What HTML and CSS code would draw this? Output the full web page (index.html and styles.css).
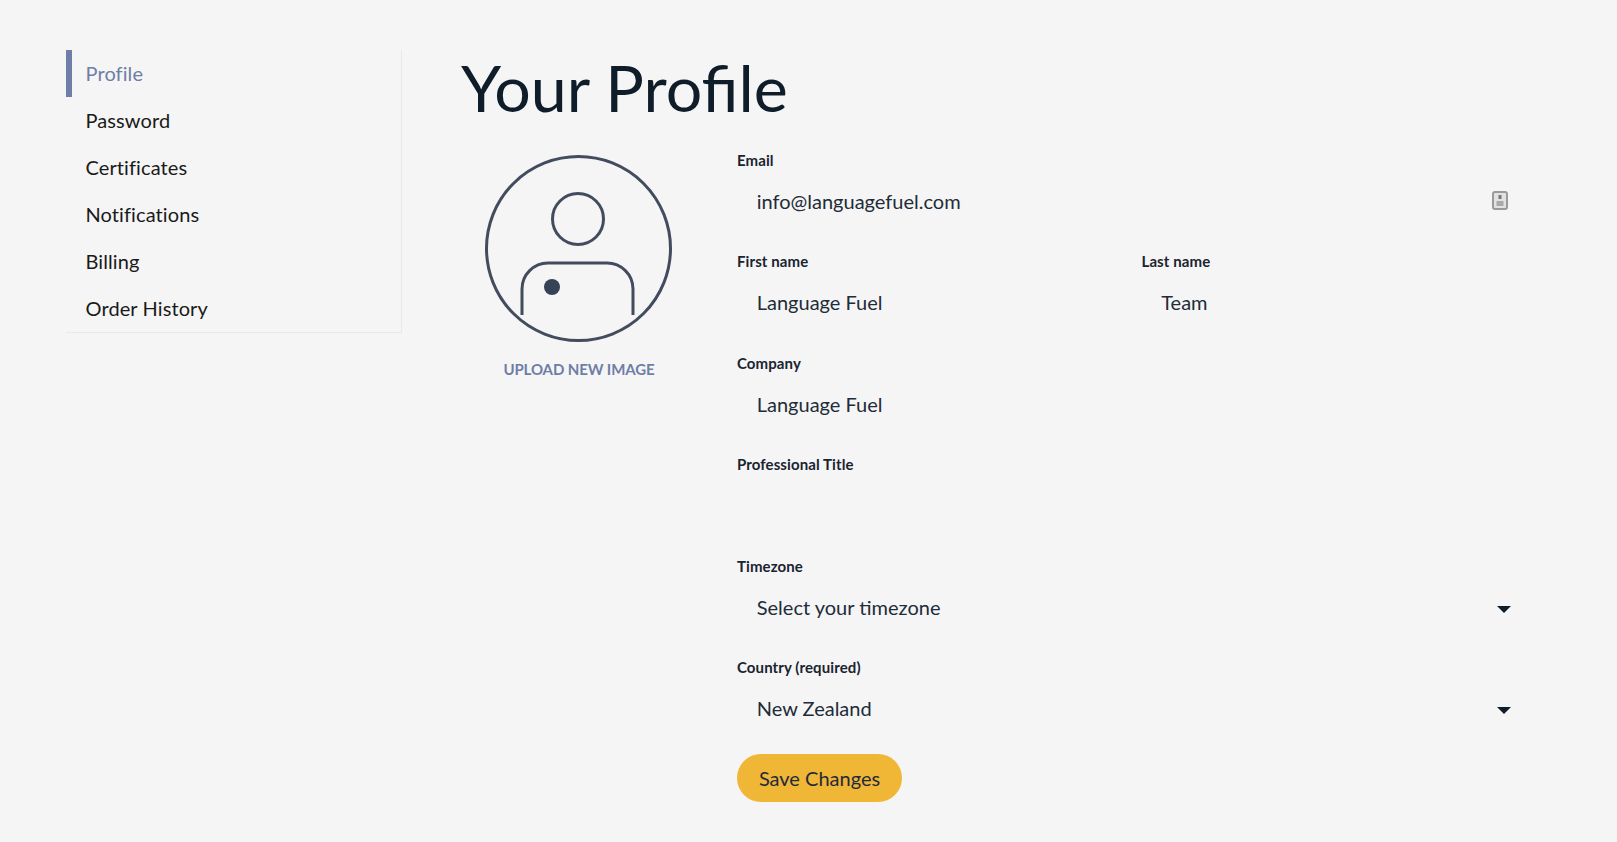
FILE: index.html
```html
<!DOCTYPE html>
<html lang="en">
<head>
    <meta charset="UTF-8">
    <title>Your Profile</title>
    <link rel="stylesheet" href="styles.css">
</head>
<body>
    <div class="page">
        <ul class="side-nav">
            <li class="active">Profile</li>
            <li>Password</li>
            <li>Certificates</li>
            <li>Notifications</li>
            <li>Billing</li>
            <li>Order History</li>
        </ul>
        <div class="content">
            <h1>Your Profile</h1>
            <div class="profile">
                <div class="avatar">
                    <svg width="188" height="188" viewBox="0 0 188 188" fill="none" stroke="#434c5e" stroke-width="3">
                        <circle cx="93.5" cy="93.5" r="92"/>
                        <circle cx="93" cy="64" r="25.5"/>
                        <path d="M37 160V134a26 26 0 0 1 26-26H122a26 26 0 0 1 26 26V160"/>
                        <circle cx="67" cy="132" r="8" fill="#364256" stroke="none"/>
                    </svg>
                    <span class="upload">UPLOAD NEW IMAGE</span>
                </div>
                <form class="fields">
                    <div class="field">
                        <label>Email</label>
                        <div class="value">info@languagefuel.com
                            <svg class="contact-icon" width="16" height="19" viewBox="0 0 16 19">
                                <rect x="1" y="1" width="14" height="17" rx="2" fill="#e2e2e2" stroke="#9a9a9a" stroke-width="2"/>
                                <rect x="6.5" y="4" width="3" height="4" fill="#777"/>
                                <rect x="4.5" y="10" width="7" height="5" fill="#aaa"/>
                            </svg>
                        </div>
                    </div>
                    <div class="field-row">
                        <div class="field">
                            <label>First name</label>
                            <div class="value">Language Fuel</div>
                        </div>
                        <div class="field">
                            <label>Last name</label>
                            <div class="value">Team</div>
                        </div>
                    </div>
                    <div class="field">
                        <label>Company</label>
                        <div class="value">Language Fuel</div>
                    </div>
                    <div class="field">
                        <label>Professional Title</label>
                        <div class="value"></div>
                    </div>
                    <div class="field">
                        <label>Timezone</label>
                        <div class="value">Select your timezone <span class="caret"></span></div>
                    </div>
                    <div class="field last">
                        <label>Country (required)</label>
                        <div class="value">New Zealand <span class="caret"></span></div>
                    </div>
                    <button type="button" class="save">Save Changes</button>
                </form>
            </div>
        </div>
    </div>
</body>
</html>
```

FILE: styles.css
```css
body {
    font-family: Lato, sans-serif;
    background-color: #f5f5f5;
    margin: 0;
    color: #111c27;
}
.page {
    display: flex;
    align-items: flex-start;
    padding: 50px 0 0 66px;
}
.side-nav {
    list-style-type: none;
    width: 335px;
    margin: 0 59px 0 0;
    padding: 0;
    border-right: 1px solid #e9e9e9;
    border-bottom: 1px solid #e9e9e9;
    font-size: 20px;
    letter-spacing: 0.1px;
    color: #1a1a1a;
}
.side-nav li {
    height: 47px;
    line-height: 47px;
    padding-left: 19.5px;
}
.side-nav .active {
    color: #6f7ea6;
    border-left: 6px solid #6f7ea6;
    padding-left: 13.5px;
}
.content {
    flex: 1;
}
h1 {
    font-size: 64.5px;
    font-weight: 400;
    line-height: 74px;
    margin: 0 0 26px;
    color: #0f1c2a;
}
.profile {
    display: flex;
}
.avatar {
    width: 276px;
    padding: 5px 0 0 24px;
    box-sizing: border-box;
    flex-shrink: 0;
}
.avatar svg {
    display: block;
}
.upload {
    display: block;
    width: 188px;
    margin-top: 17px;
    text-align: center;
    font-size: 15px;
    font-weight: 700;
    letter-spacing: -0.1px;
    color: #6f7ea6;
    white-space: nowrap;
}
.fields {
    width: 776px;
}
.field {
    height: 101.4px;
}
.field.last {
    height: 97px;
}
.field-row {
    display: flex;
}
.field-row .field {
    flex: 1;
}
.field-row .field:first-child {
    flex: none;
    width: 404.5px;
}
label {
    display: block;
    font-size: 15px;
    font-weight: 700;
    letter-spacing: 0.1px;
    line-height: 20px;
    color: #1a2430;
}
.value {
    position: relative;
    height: 48px;
    line-height: 48px;
    margin-top: 7px;
    padding-left: 19.75px;
    font-size: 20px;
    color: #222c38;
}
.contact-icon {
    position: absolute;
    right: 5px;
    top: 14px;
}
.caret {
    position: absolute;
    right: 2px;
    top: 23px;
    border-left: 7px solid transparent;
    border-right: 7px solid transparent;
    border-top: 7px solid #0f1c2a;
}
.save {
    display: block;
    width: 165px;
    height: 48px;
    border: none;
    border-radius: 24px;
    background: #f0b636;
    font-family: Lato, sans-serif;
    font-size: 20px;
    color: #1f2a3c;
    cursor: pointer;
}
```
